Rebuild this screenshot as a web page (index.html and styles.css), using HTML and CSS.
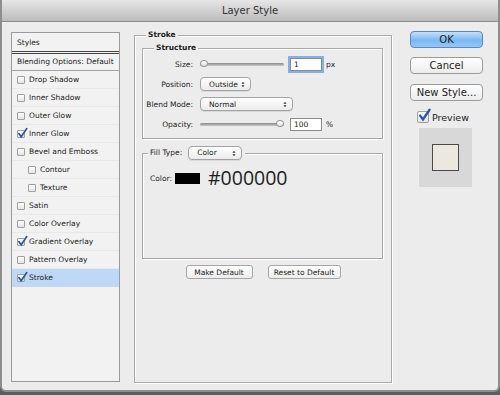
FILE: index.html
```html
<!DOCTYPE html>
<html lang="en">
<head>
    <meta charset="UTF-8">
    <title>Layer Style</title>
    <link rel="stylesheet" href="styles.css">
</head>
<body>
<div class="window">
    <div class="titlebar">Layer Style</div>
    <div class="content">

        <!-- lista de efeitos -->
        <div class="styles-list">
            <div class="list-head">Styles</div>
            <div class="list-blend">Blending Options: Default</div>
            <div class="item"><span class="cb"></span>Drop Shadow</div>
            <div class="item"><span class="cb"></span>Inner Shadow</div>
            <div class="item"><span class="cb"></span>Outer Glow</div>
            <div class="item"><span class="cb checked"><svg viewBox="0 0 11 11"><path d="M1.8 5.6 L4.2 8.8 L9.8 0.6"/></svg></span>Inner Glow</div>
            <div class="item"><span class="cb"></span>Bevel and Emboss</div>
            <div class="item sub"><span class="cb"></span>Contour</div>
            <div class="item sub"><span class="cb"></span>Texture</div>
            <div class="item"><span class="cb"></span>Satin</div>
            <div class="item"><span class="cb"></span>Color Overlay</div>
            <div class="item"><span class="cb checked"><svg viewBox="0 0 11 11"><path d="M1.8 5.6 L4.2 8.8 L9.8 0.6"/></svg></span>Gradient Overlay</div>
            <div class="item"><span class="cb"></span>Pattern Overlay</div>
            <div class="item selected"><span class="cb checked"><svg viewBox="0 0 11 11"><path d="M1.8 5.6 L4.2 8.8 L9.8 0.6"/></svg></span>Stroke</div>
        </div>

        <!-- painel do stroke -->
        <div class="group stroke-panel">
            <div class="legend">Stroke</div>
            <div class="group structure">
                <div class="legend">Structure</div>
                <div class="rows">
                    <div class="row">
                        <span class="label">Size:</span>
                        <div class="slider"><span class="knob knob-left"></span></div>
                        <input class="num focus" type="text" value="1" readonly>
                        <span class="unit">px</span>
                    </div>
                    <div class="row">
                        <span class="label">Position:</span>
                        <div class="select select-pos"><span>Outside</span><svg class="arrows" viewBox="0 0 5 8"><path d="M0.6 3.2 L2.5 0.6 L4.4 3.2 Z M0.6 4.8 L2.5 7.4 L4.4 4.8 Z"/></svg></div>
                    </div>
                    <div class="row">
                        <span class="label">Blend Mode:</span>
                        <div class="select select-blend"><span>Normal</span><svg class="arrows" viewBox="0 0 5 8"><path d="M0.6 3.2 L2.5 0.6 L4.4 3.2 Z M0.6 4.8 L2.5 7.4 L4.4 4.8 Z"/></svg></div>
                    </div>
                    <div class="row">
                        <span class="label">Opacity:</span>
                        <div class="slider"><span class="knob knob-right"></span></div>
                        <input class="num" type="text" value="100" readonly>
                        <span class="unit">%</span>
                    </div>
                </div>
            </div>

            <div class="group fill">
                <div class="legend fill-legend">
                    <span>Fill Type:</span>
                    <div class="select select-fill"><span>Color</span><svg class="arrows" viewBox="0 0 5 8"><path d="M0.6 3.2 L2.5 0.6 L4.4 3.2 Z M0.6 4.8 L2.5 7.4 L4.4 4.8 Z"/></svg></div>
                </div>
                <div class="color-row">
                    <span>Color:</span>
                    <span class="swatch"></span>
                    <span class="hex">#000000</span>
                </div>
            </div>

            <div class="btn-row">
                <button class="btn btn-make">Make Default</button>
                <button class="btn btn-reset">Reset to Default</button>
            </div>
        </div>

        <!-- botoes da direita -->
        <div class="actions">
            <button class="btn-lg btn-ok">OK</button>
            <button class="btn-lg">Cancel</button>
            <button class="btn-lg">New Style...</button>
            <div class="preview-row">
                <span class="cb cb-big checked"><svg viewBox="0 0 11 11"><path d="M1.8 5.6 L4.2 8.8 L9.8 0.6"/></svg></span>
                Preview
            </div>
            <div class="preview-box"><div class="preview-swatch"></div></div>
        </div>

    </div>
</div>
</body>
</html>
```

FILE: styles.css
```css
body {
    margin: 0;
    background-color: #5c5c5c;
    font-family: "DejaVu Sans", sans-serif;
    font-size: 7.5px;
    color: #222;
}
.window {
    width: 500px;
    height: 392px;
    box-sizing: border-box;
    background-color: #ececec;
    border: 2px solid #8e8e8e;
    border-top: 0;
    border-radius: 0 0 6px 6px;
    overflow: hidden;
}
.titlebar {
    height: 21px;
    line-height: 22px;
    border-bottom: 1px solid #8a8a8a;
    background: linear-gradient(#e6e6e6, #bcbcbc);
    text-align: center;
    font-size: 10px;
    color: #333;
}
.content {
    display: flex;
    align-items: flex-start;
    padding: 10px 0 0 9px;
}

/* lista da esquerda */
.styles-list {
    width: 109px;
    height: 350px;
    box-sizing: border-box;
    border: 1px solid #9b9b9b;
    background-color: #f2f2f2;
}
.list-head {
    height: 18px;
    line-height: 19px;
    padding-left: 5px;
    border-bottom: 3px double #444;
}
.list-blend {
    height: 16px;
    line-height: 16px;
    padding-left: 5px;
    border-bottom: 1px solid #a3a3a3;
}
.item {
    display: flex;
    align-items: center;
    height: 18px;
    box-sizing: border-box;
    padding-left: 5px;
    border-bottom: 1px solid #e9e9e9;
}
.item.sub { padding-left: 16px; }
.item.selected {
    background-color: #bfd8f6;
    border-bottom-color: #bfd8f6;
}
.cb {
    position: relative;
    flex: none;
    width: 8px;
    height: 8px;
    box-sizing: border-box;
    margin-right: 4px;
    border: 1px solid #a0a0a0;
    border-radius: 1px;
    background: linear-gradient(#fff, #e4e4e4);
}
.cb svg {
    position: absolute;
    left: -1px;
    top: -3px;
    width: 11px;
    height: 11px;
    overflow: visible;
}
.cb path {
    fill: none;
    stroke: #2a58a8;
    stroke-width: 1.7;
    stroke-linecap: round;
}

/* grupos com borda */
.group {
    box-sizing: border-box;
    border: 1px solid #a9a9a9;
    box-shadow: inset 1px 1px 0 #fff, 1px 1px 0 #fff;
}
.legend {
    display: block;
    width: max-content;
    height: 10px;
    line-height: 10px;
    margin: -6px 0 0 11px;
    padding: 0 2px;
    background-color: #ececec;
    font-weight: bold;
}
.stroke-panel {
    width: 258px;
    height: 348px;
    margin: 3px 0 0 14px;
}
.structure {
    margin: 8px 8px 0 7px;
}
.rows { padding: 1px 0 4px; }
.row {
    display: flex;
    align-items: center;
    height: 20px;
}
.label {
    width: 50px;
    margin-right: 7px;
    text-align: right;
}
.slider {
    position: relative;
    width: 84px;
    height: 3px;
    border-radius: 2px;
    background: linear-gradient(#8a8a8a, #c9c9c9);
}
.knob {
    position: absolute;
    top: -3px;
    width: 8px;
    height: 7px;
    box-sizing: border-box;
    border: 1px solid #9a9a9a;
    border-radius: 50% 50% 45% 45%;
    background: linear-gradient(#fff, #e2e2e2);
}
.knob-left { left: 0; }
.knob-right { right: 0; }
.num {
    width: 32px;
    height: 13px;
    box-sizing: border-box;
    margin: 0 0 0 6px;
    padding: 0 3px;
    border: 1px solid #8c8c8c;
    background-color: #fff;
    font-family: "DejaVu Sans", sans-serif;
    font-size: 7.5px;
    color: #222;
    outline: none;
}
.num.focus { box-shadow: 0 0 0 2px #82b1e8; }
.unit { margin-left: 4px; }
.select {
    display: flex;
    align-items: center;
    justify-content: space-between;
    height: 14px;
    box-sizing: border-box;
    padding: 0 5px 0 8px;
    border: 1px solid #a3a3a3;
    border-radius: 4px;
    background: linear-gradient(#fff, #ececec);
    box-shadow: 0 1px 0 rgba(0, 0, 0, 0.08);
}
.select-pos { width: 51px; }
.select-blend { width: 93px; }
.select-fill { width: 54px; margin-left: 6px; }
.arrows {
    width: 4px;
    height: 7px;
    fill: #333;
}

.fill {
    height: 106px;
    margin: 14px 8px 0 7px;
}
.fill-legend {
    display: flex;
    align-items: center;
    height: 14px;
    margin: -8px 0 0 5px;
    padding: 0 3px 0 2px;
    font-weight: normal;
}
.color-row {
    display: flex;
    align-items: center;
    height: 20px;
    margin-top: 8px;
    padding-left: 7px;
}
.swatch {
    width: 25px;
    height: 11px;
    margin-left: 3px;
    background-color: #000;
}
.hex {
    margin-left: 8px;
    font-family: "Open Sans", sans-serif;
    font-size: 19.5px;
    line-height: 20px;
    color: #1e1e1e;
}
.btn-row {
    display: flex;
    justify-content: center;
    gap: 15px;
    margin-top: 6px;
}
.btn {
    height: 14px;
    padding: 0;
    border: 1px solid #a6a6a6;
    border-radius: 3px;
    background: linear-gradient(#fff, #ededed);
    font-family: "DejaVu Sans", sans-serif;
    font-size: 7.5px;
    color: #222;
}
.btn-make { width: 67px; }
.btn-reset { width: 73px; }

/* coluna direita */
.actions {
    display: flex;
    flex-direction: column;
    width: 73px;
    margin: -1px 0 0 18px;
}
.btn-lg {
    height: 17px;
    margin-bottom: 9px;
    padding: 0;
    border: 1px solid #9c9c9c;
    border-radius: 4px;
    background: linear-gradient(#fff, #ececec);
    font-family: "DejaVu Sans", sans-serif;
    font-size: 10px;
    color: #1e1e1e;
}
.btn-lg + .btn-lg { margin-bottom: 10px; }
.btn-ok {
    border-color: #5f86c2;
    background: linear-gradient(#c4e0fa, #7ab8f2 55%, #94c8f6);
}
.preview-row {
    display: flex;
    align-items: center;
    height: 14px;
    margin-top: -1px;
    padding-left: 7px;
    font-size: 9.5px;
}
.cb-big {
    width: 12px;
    height: 12px;
    margin-right: 3px;
    border-radius: 2px;
}
.cb-big svg {
    left: 0;
    top: -3px;
    width: 13px;
    height: 13px;
}
.cb-big path { stroke-width: 2; }
.preview-box {
    display: flex;
    align-items: center;
    justify-content: center;
    width: 53px;
    height: 59px;
    margin: 4px 0 0 9px;
    background-color: #d8d8d8;
}
.preview-swatch {
    width: 27px;
    height: 27px;
    box-sizing: border-box;
    border: 1px solid #4a4a4a;
    background-color: #ebe8df;
}
```
